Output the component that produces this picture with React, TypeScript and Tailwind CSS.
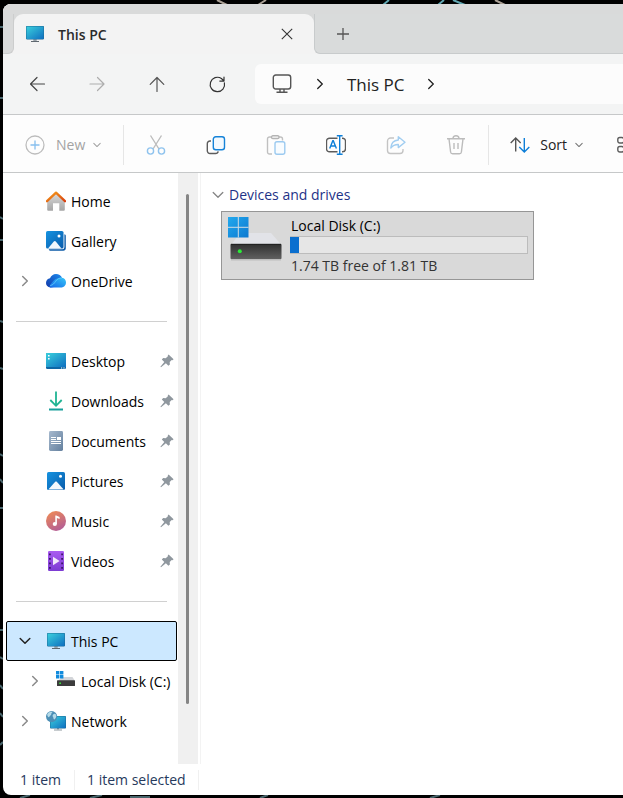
import React from 'react';

interface NavItem {
  label: string;
  icon: React.ReactNode;
  pinned?: boolean;
  chevron?: 'right' | 'down';
  nested?: boolean;
  selected?: boolean;
}

const Chevron: React.FC<{ dir?: 'right' | 'down'; size?: number; className?: string; width?: number }> = ({
  dir = 'right',
  size = 12,
  className = '',
  width = 1.3,
}) => (
  <svg width={size} height={size} viewBox="0 0 12 12" fill="none" stroke="currentColor" strokeWidth={width} className={`shrink-0 ${className}`}>
    <path d={dir === 'right' ? 'M3.7 1.5 8.3 6l-4.6 4.5' : 'M1.2 3.5 6 8.3l4.8-4.8'} strokeLinecap="round" strokeLinejoin="round" />
  </svg>
);

const MonitorIcon = () => (
  <svg width="20" height="20" viewBox="0 0 20 20">
    <defs>
      <linearGradient id="screen" x1="0" y1="0" x2="1" y2="1">
        <stop offset="0" stopColor="#3ad0dd" />
        <stop offset="1" stopColor="#0f6fc0" />
      </linearGradient>
    </defs>
    <path d="M8.3 15h3.4v2.2H8.3z" fill="#9aa3aa" />
    <path d="M6 17h8v1H6z" fill="#5f6870" />
    <rect x="1" y="2" width="18" height="13.4" rx=".8" fill="#1b6b97" />
    <rect x="1.5" y="2.5" width="17" height="12.4" rx=".5" fill="url(#screen)" />
  </svg>
);

const HomeIcon = () => (
  <svg width="20" height="20" viewBox="0 0 20 20">
    <defs>
      <linearGradient id="wall" x1="0" y1="0" x2="0" y2="1">
        <stop offset="0" stopColor="#dcdcdc" />
        <stop offset="1" stopColor="#a5a5a5" />
      </linearGradient>
      <linearGradient id="roof" x1="0" y1="0" x2="1" y2="1">
        <stop offset="0" stopColor="#f7a01c" />
        <stop offset="1" stopColor="#d8400f" />
      </linearGradient>
    </defs>
    <path d="M1.2 9.5 10 1.5l8.8 8v9.3a1 1 0 0 1-1 1h-4.5v-7.5H7v7.5H2.2a1 1 0 0 1-1-1z" fill="url(#wall)" />
    <path d="M1 10.2 10 1.6l9 8.6" fill="none" stroke="url(#roof)" strokeWidth="2.3" strokeLinecap="round" strokeLinejoin="round" />
  </svg>
);

const PictureIcon: React.FC<{ stacked?: boolean }> = ({ stacked }) => (
  <svg width="20" height="20" viewBox="0 0 20 20">
    <defs>
      <linearGradient id="sky" x1="0" y1="0" x2="1" y2="1">
        <stop offset="0" stopColor="#1592e0" />
        <stop offset="1" stopColor="#0a5cab" />
      </linearGradient>
    </defs>
    {stacked && <path d="M18.4 3.2c.9.2 1.4.8 1.4 1.6v12.4c0 1.5-1 2.5-2.500 2.500H4.800c-1 0-1.800-.5-2.100-1.500H16.400a2 2 0 0 0 2-2z" fill="#0c5ba8" />}
    <rect x={stacked ? 0 : 1} y={stacked ? 0 : 1} width={stacked ? 17.5 : 18} height={stacked ? 17.5 : 18} rx="1.6" fill="url(#sky)" />
    <path d={stacked ? 'M2 17.5 7.800 10.600c.6-.7 1.400-.7 2 0l5.700 6.900z' : 'M2.300 18.500 9 11c.6-.6 1.400-.6 2 0l6.700 7.500z'} fill="#f2f8fd" />
    <circle cx={stacked ? 13 : 14.5} cy={stacked ? 5 : 5.3} r="1.5" fill="#fff" />
  </svg>
);

const OneDriveIcon = () => (
  <svg width="20" height="20" viewBox="0 0 20 20">
    <defs>
      <linearGradient id="cloudA" x1="0" y1="1" x2="1" y2="0">
        <stop offset="0" stopColor="#1238a8" />
        <stop offset="1" stopColor="#1c8cf0" />
      </linearGradient>
      <linearGradient id="cloudB" x1="0" y1="1" x2="1" y2="0">
        <stop offset="0" stopColor="#1468e8" />
        <stop offset="1" stopColor="#37c6f7" />
      </linearGradient>
    </defs>
    <path d="M4.5 16.5C1.8 16.3 0 14.3 0 12c0-2.5 1.7-4.3 4-4.7C5 4.600 7.300 3 10 3c2.700 0 5.100 1.500 6.100 4L8 16z" fill="url(#cloudA)" />
    <path d="M4.6 16.5c-1.200 0-1.400-.9-.6-2.200C6.500 10.500 9.600 6.800 15 6.800h1c2.300.4 4 2.300 4 4.700 0 2.800-2.200 5-5 5z" fill="url(#cloudB)" />
    <path d="M4.2 14.5C7.200 14 8 12.500 9.700 10.200 11.500 8 13 6.900 16 6.900" fill="none" stroke="#65cffa" strokeWidth=".8" />
  </svg>
);

const DesktopIcon = () => (
  <svg width="20" height="20" viewBox="0 0 20 20">
    <rect x="0" y="2" width="20" height="16" rx="1.3" fill="#0e67a5" />
    <path d="M1.3 2h17.400A1.300 1.300 0 0 1 20 3.300V16H0V3.300A1.300 1.300 0 0 1 1.300 2z" fill="url(#screen)" />
    <path d="M2 4h1.600v1.600H2zM2 7h1.600v1.600H2zM15 16.400h1.200v1H15zM17.400 16.400h1.200v1h-1.200z" fill="#fff" />
  </svg>
);

const DownloadIcon = () => (
  <svg width="20" height="20" viewBox="0 0 20 20" fill="none" stroke="#1fb493" strokeWidth="1.8">
    <path d="M10 .5v14M4.300 9l5.700 5.800L15.700 9" />
    <path d="M3 18.500h14" stroke="#179f9b" strokeWidth="2" />
  </svg>
);

const DocumentIcon = () => (
  <svg width="20" height="20" viewBox="0 0 20 20">
    <defs>
      <linearGradient id="paper" x1="0" y1="0" x2="1" y2="1">
        <stop offset="0" stopColor="#a6b9ce" />
        <stop offset="1" stopColor="#64809e" />
      </linearGradient>
    </defs>
    <rect x="3" y="0" width="14" height="20" rx="1.4" fill="url(#paper)" />
    <path d="M5 6h5v1H5zM5 8h5v1H5zM5 10h10v1H5zM5 12h10v1H5zM11 6h4v3h-4z" fill="#fff" />
  </svg>
);

const MusicIcon = () => (
  <svg width="20" height="20" viewBox="0 0 20 20">
    <defs>
      <linearGradient id="disc" x1=".2" y1="0" x2=".7" y2="1">
        <stop offset="0" stopColor="#ee8a56" />
        <stop offset="1" stopColor="#b15c98" />
      </linearGradient>
    </defs>
    <circle cx="10" cy="10" r="10" fill="url(#disc)" />
    <circle cx="8.8" cy="13" r="2.1" fill="#fff" />
    <path d="M9.3 4.5h1l3.300 1.500v2l-2.700-1.100V13H9.300z" fill="#fff" />
  </svg>
);

const VideoIcon = () => (
  <svg width="20" height="20" viewBox="0 0 20 20">
    <defs>
      <linearGradient id="film" x1="0" y1="0" x2="0" y2="1">
        <stop offset="0" stopColor="#a95bf0" />
        <stop offset="1" stopColor="#7c3bd3" />
      </linearGradient>
    </defs>
    <rect x="2" y="0" width="16" height="20" rx="1.3" fill="url(#film)" />
    <path
      d="M3 2.5h1.800v1.800H3zM3 7h1.800v1.800H3zM3 11.500h1.800v1.800H3zM3 16h1.800v1.800H3zM15.200 2.500H17v1.800h-1.800zM15.200 7H17v1.800h-1.800zM15.200 11.500H17v1.800h-1.800zM15.200 16H17v1.800h-1.800z"
      fill="#3d1768"
    />
    <path d="M7 5.800v8.400l6.600-4.200z" fill="#f1e8fb" />
  </svg>
);

const SmallDriveIcon = () => (
  <svg width="20" height="20" viewBox="0 0 20 20">
    <path d="M7 6h9.500l2.500 4H1z" fill="#d3d5d9" />
    <path d="M0 0h3.400v3.400H0zM4 0h3.400v3.400H4zM0 4h3.400v3.400H0zM4 4h3.400v3.400H4z" fill="#118bdd" />
    <rect x="1" y="9.3" width="18" height="5.7" rx=".6" fill="#3c3c3c" />
    <rect x="3.3" y="11.5" width="1.7" height="1.5" fill="#39e03a" />
  </svg>
);

const NetworkIcon = () => (
  <svg width="20" height="20" viewBox="0 0 20 20">
    <path d="M11 16h2v2.500h-2z" fill="#9aa3aa" />
    <path d="M8 18.500h8v1H8z" fill="#8f989f" />
    <rect x="4" y="5" width="16" height="12.500" rx=".8" fill="#1b6b97" />
    <rect x="4.5" y="5.5" width="15" height="11.500" rx=".5" fill="url(#screen)" />
    <circle cx="5.6" cy="5.6" r="5.6" fill="#4c8fb6" />
    <path d="M1.2 3.200C2.400 1 5 .3 6.300.8c.7.800-1.300 1.300-1.100 2.600.1 1-1.600 1.100-1.800 2.400-.5 1-2.200-.2-2.200-2.600zM7.200 3.500c1-1 2.200-.8 3 .5.400 2-.7 3.600-1.800 4.500-1.400-.6-.6-2-1.500-2.700-.5-.8-.3-1.700.3-2.300z" fill="#b5dbe9" />
  </svg>
);

const PinIcon = () => (
  <svg width="14" height="14" viewBox="0 0 14 14" fill="#8f979e" className="ml-auto shrink-0">
    <path d="M8.6.4 13.600 5.200l-1.100 1-.8-.1-2 2 .2 2.300-1.500 1.400-2.500-2.500L1 13.300.4 12.800 4.300 8 1.800 5.500 3.200 4.100l2.500.2 2.200-2-.1-.9z" />
  </svg>
);

const DriveIcon = () => (
  <svg width="56" height="46" viewBox="0 0 56 46" className="shrink-0">
    <defs>
      <linearGradient id="win" x1="0" y1="0" x2="1" y2="1">
        <stop offset="0" stopColor="#22a9ee" />
        <stop offset="1" stopColor="#0d78d0" />
      </linearGradient>
      <linearGradient id="case" x1="0" y1="0" x2="0" y2="1">
        <stop offset="0" stopColor="#303030" />
        <stop offset="1" stopColor="#606060" />
      </linearGradient>
    </defs>
    <path d="M12 16h31L53.500 28H3z" fill="#e2e3e8" />
    <path d="M0 0h20.500v20.500H0z" fill="url(#win)" />
    <path d="M10.300 0v20.500M0 10.300h20.500" stroke="#d0dce4" strokeWidth="1" />
    <path d="M3 42h50v1.500H3z" fill="#bdbdbd" />
    <rect x="2.5" y="27" width="51" height="15" rx=".8" fill="url(#case)" />
    <path d="M3 27.300h50" stroke="#202020" />
    <circle cx="11.8" cy="34.2" r="2" fill="#2bea38" />
  </svg>
);

const BEFORE_LINE: NavItem[] = [
  { label: 'Home', icon: <HomeIcon /> },
  { label: 'Gallery', icon: <PictureIcon stacked /> },
  { label: 'OneDrive', icon: <OneDriveIcon />, chevron: 'right' },
];

const PINNED: NavItem[] = [
  { label: 'Desktop', icon: <DesktopIcon />, pinned: true },
  { label: 'Downloads', icon: <DownloadIcon />, pinned: true },
  { label: 'Documents', icon: <DocumentIcon />, pinned: true },
  { label: 'Pictures', icon: <PictureIcon />, pinned: true },
  { label: 'Music', icon: <MusicIcon />, pinned: true },
  { label: 'Videos', icon: <VideoIcon />, pinned: true },
];

const DEVICES: NavItem[] = [
  { label: 'This PC', icon: <MonitorIcon />, chevron: 'down', selected: true },
  { label: 'Local Disk (C:)', icon: <SmallDriveIcon />, chevron: 'right', nested: true },
  { label: 'Network', icon: <NetworkIcon />, chevron: 'right' },
];

const NavList: React.FC<{ items: NavItem[] }> = ({ items }) => (
  <ul>
    {items.map((item) => (
      <li key={item.label}>
        <button
          className={`flex h-10 w-full items-center border pr-[2px] text-left whitespace-nowrap ${item.nested ? 'pl-[22px]' : 'pl-3'} ${
            item.selected ? 'rounded-[2px] border-black bg-[#cce8ff]' : 'border-transparent'
          }`}
        >
          <span className={`flex w-3 shrink-0 ${item.selected ? 'text-[#222]' : 'text-[#8a8a8a]'}`}>
            {item.chevron && <Chevron dir={item.chevron} width={1.5} />}
          </span>
          <span className="mr-[5px] ml-[15px] shrink-0">{item.icon}</span>
          <span className="pt-[2px]">{item.label}</span>
          {item.pinned && <PinIcon />}
        </button>
      </li>
    ))}
  </ul>
);

const Separator = () => (
  <div className="flex h-10 items-center pr-[10px] pl-[10px]">
    <hr className="w-full border-[#d0d0d0]" />
  </div>
);

const TitleBar = () => (
  <header className="shrink-0 bg-[#f3f3f3]">
    <div className="h-[10px] bg-[#d9dada]"></div>
    <div className="flex h-10">
      <div className="w-[11px] shrink-0 rounded-br-md border-r border-b border-[#cccdcd] bg-[#d9dada]"></div>
      <div className="w-[300px] shrink-0 bg-[#d9dada]">
        <div className="flex h-full items-center rounded-t-[9px] bg-[#f3f3f3] pr-[17px] pl-[11px]">
          <MonitorIcon />
          <span className="ml-[13px] pt-[2px] text-sm font-semibold text-[#2b2b2b]">This PC</span>
          <button aria-label="Close tab" className="ml-auto flex h-5 w-5 items-center justify-center text-[#333]">
            <svg width="12" height="12" viewBox="0 0 12 12" stroke="currentColor" strokeWidth="1.1">
              <path d="M.8.8l10.400 10.400M11.200.8.8 11.200" />
            </svg>
          </button>
        </div>
      </div>
      <div className="flex flex-1 items-center rounded-bl-md border-b border-l border-[#c8cbcc] bg-[#d9dbdb] pl-[18px]">
        <button aria-label="New tab" className="flex h-5 w-5 items-center justify-center text-[#555]">
          <svg width="12" height="12" viewBox="0 0 12 12" stroke="currentColor" strokeWidth="1.3">
            <path d="M6 0v12M0 6h12" />
          </svg>
        </button>
      </div>
    </div>
  </header>
);

const NAV_BUTTONS = [
  { label: 'Back', d: 'M17.500 10h-14M10 3.500 3.500 10l6.500 6.500', tone: 'text-[#454545]' },
  { label: 'Forward', d: 'M3 10h14M10.500 3.500l6.500 6.500-6.500 6.500', tone: 'text-[#adadad]' },
  { label: 'Up', d: 'M10 17.500V3.500M3.200 10.300 10 3.500l6.800 6.800', tone: 'text-[#555]' },
  { label: 'Refresh', d: 'M17.400 8.800a7.200 7.200 0 1 1-3-4.300l2.400 2.200M17 3v4.100h-4.200', tone: 'text-[#333]' },
];

const AddressRow = () => (
  <div className="flex h-[61px] shrink-0 items-center border-b border-[#c6c8c9] bg-[#f3f4f4] pl-[14px]">
    <div className="flex shrink-0 gap-5">
      {NAV_BUTTONS.map((b) => (
        <button key={b.label} aria-label={b.label} className={`flex h-10 w-10 items-center justify-center ${b.tone}`}>
          <svg width="20" height="20" viewBox="0 0 20 20" fill="none" stroke="currentColor" strokeWidth="1.2" strokeLinecap="round" strokeLinejoin="round">
            <path d={b.d} />
          </svg>
        </button>
      ))}
    </div>
    <nav aria-label="Address" className="ml-[18px] flex h-10 flex-1 items-center rounded-l-md bg-[#fcfcfc] pl-[17px] text-[#222]">
      <svg width="20" height="20" viewBox="0 0 20 20" fill="none" stroke="#555" strokeWidth="1.4">
        <rect x="1.3" y="1" width="17.400" height="14" rx="2.5" />
        <path d="M8 15v3M12 15v3M4.500 18.300h11" />
      </svg>
      <Chevron className="ml-[22px]" />
      <a href="#this-pc" className="ml-[21px] pt-[2px] text-[17px]">This PC</a>
      <Chevron className="ml-5" />
    </nav>
  </div>
);

const TOOLS = [
  {
    label: 'Cut',
    icon: (
      <>
        <path d="M4.500 .5 13 14M15.500 .5 7 14" stroke="#bdbdbd" />
        <circle cx="4.5" cy="16" r="3.1" stroke="#8fc3ee" />
        <circle cx="15.5" cy="16" r="3.1" stroke="#8fc3ee" />
      </>
    ),
  },
  {
    label: 'Copy',
    icon: (
      <>
        <path d="M5 6H4A2.700 2.700 0 0 0 1.300 8.700v7.100a2.700 2.700 0 0 0 2.700 2.700h5.500a2.700 2.700 0 0 0 2.700-2.200" stroke="#5c5c5c" />
        <rect x="7.3" y="1.700" width="11.200" height="13" rx="2.500" stroke="#1683d8" fill="#f3f9fe" />
      </>
    ),
  },
  {
    label: 'Paste',
    icon: (
      <>
        <path d="M6 19H3.500A2 2 0 0 1 1.500 17V4a2 2 0 0 1 2-2h2M13 2h1.500a2 2 0 0 1 2 2v1.500" stroke="#c0c0c0" />
        <rect x="5.5" y=".8" width="7.5" height="2.7" rx="1.3" stroke="#b4b4b4" />
        <rect x="9" y="6.7" width="9.8" height="12.5" rx="2" stroke="#9ccaf0" fill="#f8fcff" />
      </>
    ),
  },
  {
    label: 'Rename',
    icon: (
      <>
        <path d="M11.500 3.200H3.500A3 3 0 0 0 .5 6.200v7.600a3 3 0 0 0 3 3h8M16 3.200h.5a3 3 0 0 1 3 3v7.600a3 3 0 0 1-3 3H16" stroke="#5c5c5c" />
        <path d="M3.700 13.500 6.800 5.700h.5l3.100 7.800M4.800 11h4.500M13.700.8v18.400M10.800.8h5.800M10.800 19.200h5.800" stroke="#0f7fd8" />
      </>
    ),
  },
  {
    label: 'Share',
    icon: (
      <>
        <path d="M8 3H4.500a3 3 0 0 0-3 3v9.500a3 3 0 0 0 3 3h9.500a3 3 0 0 0 3-3V14" stroke="#c4c4c4" />
        <path d="M12.300 1.800 19 7.200l-6.700 5.400V9.500c-3.500-.1-5.500 1-7.500 3.500.3-4.500 2.700-7.600 7.500-8z" stroke="#a2cef1" strokeLinejoin="round" />
      </>
    ),
  },
  {
    label: 'Delete',
    icon: (
      <path d="M1 3.800h18M7 3.800a3 3 0 0 1 6 0M3 3.800l1.600 13.200a2 2 0 0 0 2 1.800h6.800a2 2 0 0 0 2-1.800L17 3.800M8 8v6M12 8v6" stroke="#bcbcbc" />
    ),
  },
];

const Toolbar = () => (
  <div className="flex h-[58px] shrink-0 items-center overflow-hidden border-b border-[#c6c8c9] bg-[#fdfdfd] pt-[2px] pl-[22px] text-sm">
    <button className="flex shrink-0 items-center text-[#a3a3a3]">
      <svg width="20" height="20" viewBox="0 0 20 20" fill="none" strokeWidth="1.3">
        <circle cx="10" cy="10" r="9" stroke="#bdbdbd" />
        <path d="M10 5.500v9M5.500 10h9" stroke="#86bfee" />
      </svg>
      <span className="ml-[11px]">New</span>
      <Chevron dir="down" size={8} width={1.6} className="ml-2" />
    </button>
    <div className="mr-3 ml-[22px] h-10 w-px shrink-0 bg-[#e6e6e6]"></div>
    <div className="flex shrink-0 gap-5">
      {TOOLS.map((tool) => (
        <button key={tool.label} aria-label={tool.label} className="flex h-10 w-10 items-center justify-center">
          <svg width="20" height="20" viewBox="0 0 20 20" fill="none" strokeWidth="1.4">
            {tool.icon}
          </svg>
        </button>
      ))}
    </div>
    <div className="mr-[21px] ml-3 h-10 w-px shrink-0 bg-[#e6e6e6]"></div>
    <button className="flex shrink-0 items-center text-[#222]">
      <svg width="20" height="20" viewBox="0 0 20 20" fill="none" strokeWidth="1.4">
        <path d="M5.700 16.500V3M.7 8l5-5 5 5" stroke="#555" />
        <path d="M14.300 3v14M9.300 12l5 5 5-5" stroke="#0f7fd8" />
      </svg>
      <span className="ml-[10px]">Sort</span>
      <Chevron dir="down" size={8} width={1.6} className="ml-2 text-[#777]" />
    </button>
    <button aria-label="View" className="ml-[34px] shrink-0">
      <svg width="20" height="20" viewBox="0 0 20 20" fill="none" stroke="#5c5c5c" strokeWidth="1.4">
        <rect x=".8" y="2.5" width="6" height="5.5" rx="2" />
        <rect x=".8" y="11.5" width="6" height="5.5" rx="2" />
        <path d="M10 5.300h9M10 14.300h9" />
      </svg>
    </button>
  </div>
);

const DriveTile = () => (
  <button className="mt-[6px] flex w-[313px] max-w-full items-start border border-[#969696] bg-[#d9d9d9] py-[3px] pr-[5px] pl-[6px] text-left">
    <span className="shrink-0 pt-[2px]">
      <DriveIcon />
    </span>
    <div className="ml-[6px] flex-1">
      <div className="pl-px leading-[21px] text-black">Local Disk (C:)</div>
      <div
        role="progressbar"
        aria-label="Used space"
        aria-valuenow={4}
        className="h-[18px] border border-l-0 border-[#bcbcbc] bg-[#e6e6e6]"
      >
        <div className="h-full bg-[#0a6fcf]" style={{ width: '4%' }}></div>
      </div>
      <div className="pt-px pl-px leading-[21px] text-[#333]">1.74 TB free of 1.81 TB</div>
    </div>
  </button>
);

const App: React.FC = () => {
  return (
    <div className="relative flex h-screen overflow-hidden bg-black pt-1 pb-[3px] pl-[3px] font-['Open_Sans','Noto_Sans',sans-serif] text-sm">
      {/* Wallpaper showing round the window edge */}
      <svg className="absolute inset-0 h-full w-full" fill="none" strokeWidth="2">
        <path d="M217 0l10 5 M266 0l-8 5 M495 0l10 5" stroke="#aaa095" />
        <path d="M389 0l-6 5M444 0l-6 5M453 0l12 5" stroke="#62a7b2" />
        <path d="M0 27h3M0 98h3M0 217l3 2M0 240h3M0 321l3 1M0 368l3 1M0 454l3 2M0 479l3 4M0 508h3M0 630h3M0 657l3 2M0 685l3 4M0 713l3 4M0 745l3-3M20 798l10-3M90 798l12-3M130 797h20M260 798l8-3M430 798l10-3" stroke="#48656c" />
      </svg>

      <main className="relative flex min-w-0 flex-1 flex-col overflow-hidden rounded-l-lg bg-white">
        <TitleBar />
        <AddressRow />
        <Toolbar />

        <div className="flex min-h-0 flex-1">
          <aside className="w-[175px] shrink-0 overflow-hidden pt-2 pr-px pl-[3px]">
            <NavList items={BEFORE_LINE} />
            <Separator />
            <NavList items={PINNED} />
            <Separator />
            <NavList items={DEVICES} />
          </aside>
          <div className="w-5 shrink-0 bg-[#f0f0f0] pt-[21px] pb-[60px] pl-2">
            <div className="h-full w-[3px] rounded-full bg-[#858585]"></div>
          </div>
          <section className="ml-[2px] min-w-0 flex-1 border-l border-[#f3f3f3] pt-3 pl-5">
            <button className="-ml-[9px] flex items-center text-[#1e3287]">
              <Chevron dir="down" className="text-[#858585]" />
              <span className="ml-[5px] leading-5">Devices and drives</span>
            </button>
            <DriveTile />
          </section>
        </div>

        <footer className="flex h-[31px] shrink-0 items-center pl-[17px] text-[#26395c]">
          <span>1 item</span>
          <span className="ml-[13px] h-5 w-px bg-[#f0f0f0]"></span>
          <span className="ml-3">1 item selected</span>
          <span className="ml-3 h-5 w-px bg-[#f0f0f0]"></span>
        </footer>
      </main>
    </div>
  );
};

export default App;
